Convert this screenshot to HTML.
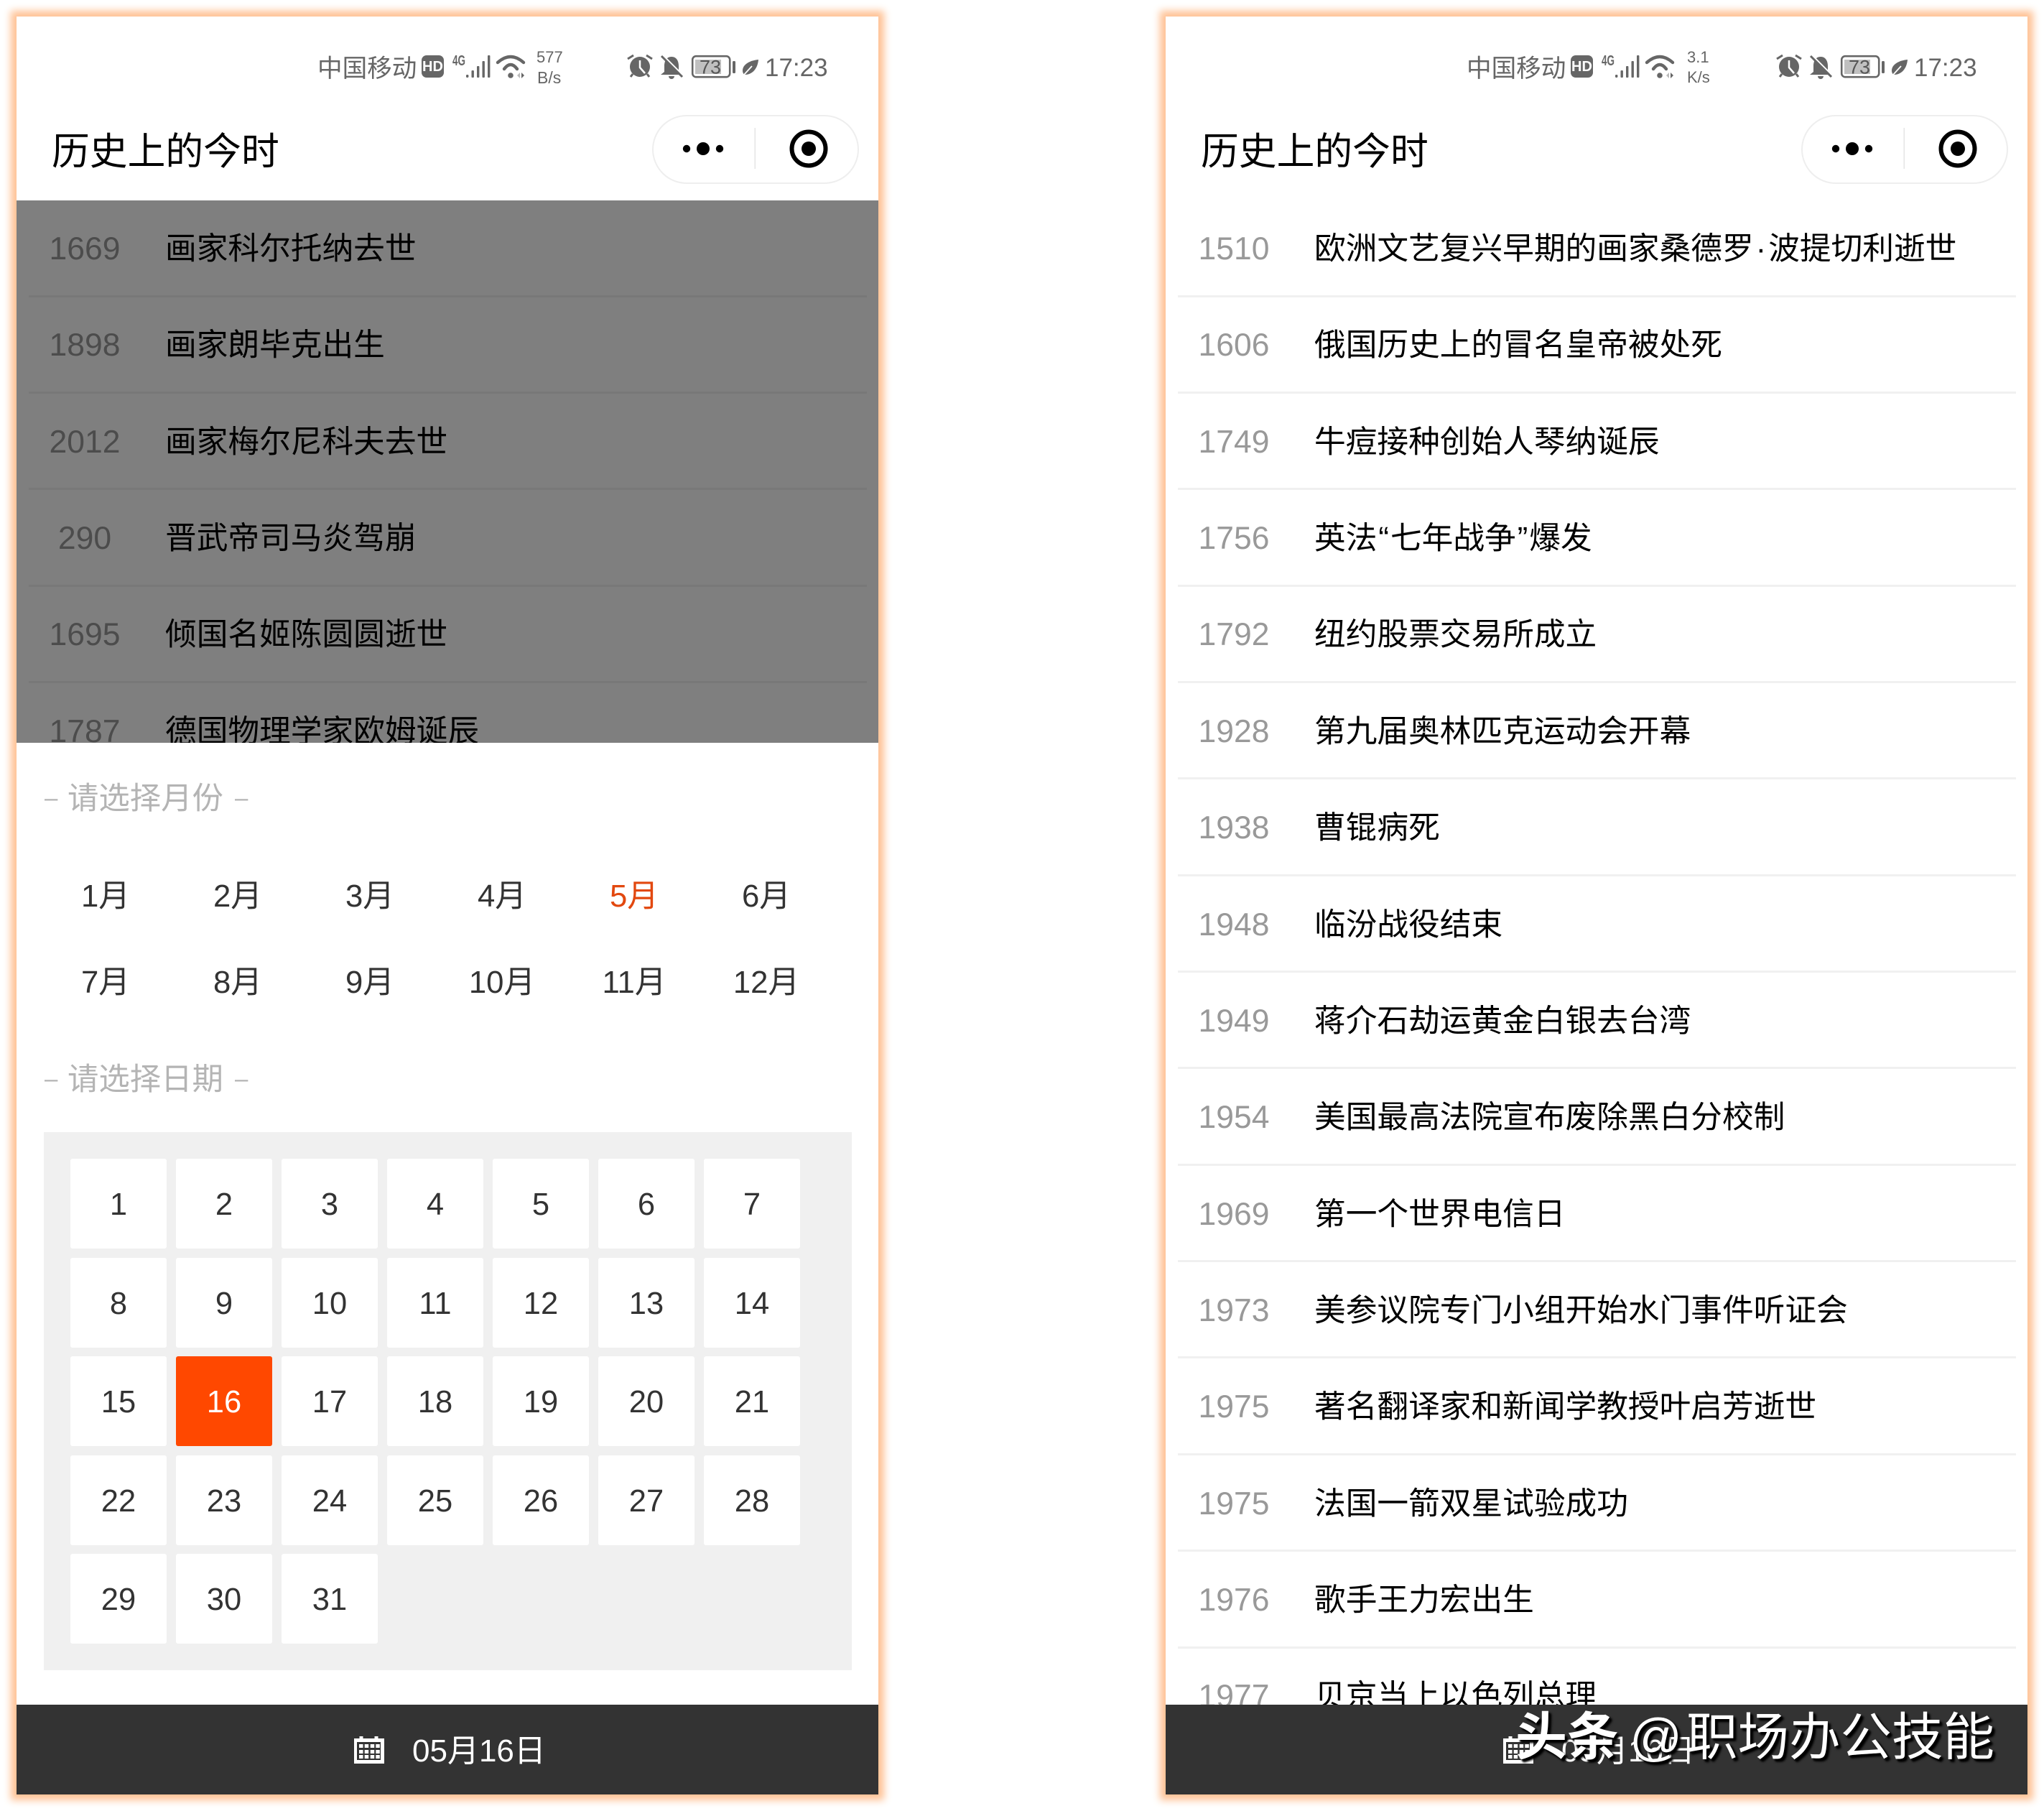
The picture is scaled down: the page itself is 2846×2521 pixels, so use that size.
<!DOCTYPE html>
<html lang="zh">
<head>
<meta charset="utf-8">
<title>历史上的今时</title>
<style>
html,body{margin:0;padding:0;background:#fff}
body{position:relative;width:2846px;height:2521px;overflow:hidden;font-family:"Liberation Sans","Noto Sans CJK SC",sans-serif}
.p{position:absolute;left:0;top:0;width:1300px;height:2521px}
.p2{left:1600px}
.phone{position:absolute;left:23px;top:23px;width:1200px;height:2475px;background:#fff;box-shadow:0 0 10px 8px #ffc295}
.t{position:absolute;white-space:nowrap}
.st{left:442px;top:66px;font-size:34.6px;line-height:60px;color:#666}
.title{left:72px;top:177px;font-size:52.8px;line-height:70px;color:#000}
.cap{position:absolute;left:908px;top:160px;width:283.5px;height:92px;border:2px solid #eee;border-radius:48px;box-sizing:content-box}
.list{position:absolute;left:23px;top:279px;width:1200px;overflow:hidden}
.row{position:relative;height:134.36px}
.row:after{content:"";position:absolute;left:17px;right:16px;top:131.5px;height:3px;background:#f0f0f0}
.y{position:absolute;left:35px;width:120px;text-align:center;top:38px;line-height:60px;font-size:44.5px;color:#999}
.n{position:absolute;left:207px;top:38px;line-height:60px;font-size:43.7px;color:#000;white-space:nowrap}
.q{margin:0 2px}
.dot{margin:0 3px}
.mask{position:absolute;left:23px;top:279px;width:1200px;height:755px;background:rgba(0,0,0,.5)}
.sec{color:#b4b4b4;font-size:43.4px;line-height:60px;left:62px}
.sec i{font-style:normal;font-size:33px;display:inline-block;width:18px;vertical-align:baseline;position:relative;top:-4px}
.sec i:first-child{margin-right:14px}
.sec i:last-child{margin-left:16px}
.months{position:absolute;left:55px;width:1104px;display:flex;flex-wrap:wrap}
.months div{width:184px;height:120px;line-height:60px;text-align:center;font-size:43.7px;color:#333}
.panel{position:absolute;left:61px;top:1576px;width:1125px;height:749px;background:#f0f0f0}
.cal{position:absolute;left:98px;top:1613px;width:1040px;display:flex;flex-wrap:wrap}
.cal div{width:134px;height:125px;margin:0 13px 12.5px 0;background:#fff;border-radius:3px;text-align:center;line-height:129px;font-size:43.5px;color:#333}
.cal .on{background:#ff4800;color:#fff}
.bar{position:absolute;left:23px;top:2373px;width:1200px;height:125px;background:#333}
.bt{left:574px;top:2408px;line-height:60px;font-size:44px;color:#fff}
.wm{color:#fff;text-shadow:3px 3px 2px #000,4px 4px 3px #000;line-height:90px;top:2374px;font-size:72px}
</style>
</head>
<body>
<svg width="0" height="0" style="position:absolute">
<defs>
<symbol id="icons" viewBox="0 0 1300 300" overflow="visible">
<rect x="587" y="77" width="31" height="31" rx="7" fill="#666"/>
<rect x="649" y="104" width="3.4" height="4" rx="1.2" fill="#666"/>
<rect x="656.5" y="98" width="3.4" height="10" rx="1" fill="#666"/>
<rect x="664" y="92" width="3.4" height="16" rx="1" fill="#666"/>
<rect x="671.5" y="85" width="3.4" height="23" rx="1" fill="#666"/>
<rect x="679" y="77" width="3.4" height="31" rx="1" fill="#666"/>
<path d="M693 87Q711 71 729 87M702 96Q711 84 720 96" fill="none" stroke="#666" stroke-width="4.4" stroke-linecap="round"/>
<circle cx="711" cy="105" r="3.8" fill="#666"/>
<path d="M724 101V109L720 105Z" fill="#bbb"/><path d="M726 101V109L730 105Z" fill="#666"/>
<circle cx="891" cy="93" r="14" fill="#666"/>
<path d="M891 84V94L898 102" fill="none" stroke="#fff" stroke-width="2.5"/>
<path d="M874 82L882 77M900 77L908 82M878 107L881 103M904 107L901 103" fill="none" stroke="#666" stroke-width="3"/>
<path d="M935 79C928 79 925 85 925 92V100L920 104H950L945 100V92C945 85 942 79 935 79Z" fill="#666"/>
<path d="M931 106A4 4 0 0 0 939 106Z" fill="#666"/>
<path d="M923 77L952 106" stroke="#fff" stroke-width="2.5"/>
<path d="M921 78L950 107" stroke="#666" stroke-width="3"/>
<rect x="964.2" y="78.2" width="52" height="29" rx="5" fill="#fff" stroke="#666" stroke-width="2.6"/>
<rect x="968" y="83" width="36" height="20" fill="#c0c0c0"/>
<rect x="1020" y="85" width="4" height="17" rx="1.5" fill="#666"/>
<path d="M1056 83C1044 84 1034 90 1034 98C1034 101 1035 103 1037 104C1048 104 1055 95 1056 83Z" fill="#666"/>
<path d="M1036 104L1047 92" stroke="#fff" stroke-width="1.8"/>
<circle cx="956" cy="207" r="5.2" fill="#000"/><circle cx="979" cy="207" r="9" fill="#000"/><circle cx="1002" cy="207" r="5.2" fill="#000"/>
<rect x="1050.5" y="178" width="1.5" height="57" fill="#e4e4e4"/>
<circle cx="1126" cy="207" r="23.5" fill="none" stroke="#000" stroke-width="6"/>
<circle cx="1126" cy="207" r="10" fill="#000"/>
</symbol>
<symbol id="calicon" viewBox="0 0 1300 2521" overflow="visible">
<rect x="500.5" y="2417" width="5" height="6" fill="#fff"/><rect x="521.5" y="2417" width="5" height="6" fill="#fff"/>
<rect x="493" y="2420" width="42" height="35" fill="#fff"/>
<rect x="497" y="2425" width="33" height="25" fill="#333"/>
<g fill="#fff">
<rect x="500" y="2428" width="5.5" height="5"/><rect x="507.7" y="2428" width="5.5" height="5"/><rect x="515.7" y="2428" width="5.5" height="5"/><rect x="523.3" y="2428" width="5.5" height="5"/>
<rect x="500" y="2436" width="5.5" height="5"/><rect x="507.7" y="2436" width="5.5" height="5"/><rect x="515.7" y="2436" width="5.5" height="5"/><rect x="523.3" y="2436" width="5.5" height="5"/>
<rect x="500" y="2443" width="5.5" height="5"/><rect x="507.7" y="2443" width="5.5" height="5"/><rect x="515.7" y="2443" width="5.5" height="5"/><rect x="523.3" y="2443" width="5.5" height="5"/>
</g>
</symbol>
</defs>
</svg>

<!-- LEFT PHONE -->
<div class="p">
  <div class="phone"></div>
  <div class="list" style="height:755px">
    <div class="row"><div class="y">1669</div><div class="n">画家科尔托纳去世</div></div>
    <div class="row"><div class="y">1898</div><div class="n">画家朗毕克出生</div></div>
    <div class="row"><div class="y">2012</div><div class="n">画家梅尔尼科夫去世</div></div>
    <div class="row"><div class="y">290</div><div class="n">晋武帝司马炎驾崩</div></div>
    <div class="row"><div class="y">1695</div><div class="n">倾国名姬陈圆圆逝世</div></div>
    <div class="row"><div class="y">1787</div><div class="n">德国物理学家欧姆诞辰</div></div>
  </div>
  <div class="mask"></div>
  <div class="cap"></div>
  <svg style="position:absolute;left:0;top:0" width="1300" height="300" viewBox="0 0 1300 300"><use href="#icons" width="1300" height="300"/>
    <text x="602.5" y="99" text-anchor="middle" font-size="20" font-weight="700" fill="#fff" font-family="Liberation Sans">HD</text>
    <text x="630" y="91" font-size="20" font-weight="700" fill="#666" font-family="Liberation Sans" textLength="18" lengthAdjust="spacingAndGlyphs">4G</text>
    <text x="989" y="102.500" text-anchor="middle" font-size="27" fill="#555" font-family="Liberation Sans">73</text>
  </svg>
  <div class="t st">中国移动</div>
  <div class="t" style="left:747px;top:65px;font-size:22px;line-height:30px;color:#666">577</div>
  <div class="t" style="left:748px;top:93px;font-size:23px;line-height:30px;color:#666">B/s</div>
  <div class="t" style="left:1065px;top:75px;font-size:35px;line-height:40px;color:#666">17:23</div>
  <div class="t title">历史上的今时</div>
  <div class="t sec" style="top:1082px"><i>–</i>请选择月份<i>–</i></div>
  <div class="months" style="top:1218px">
    <div>1月</div><div>2月</div><div>3月</div><div>4月</div><div style="color:#e2480f">5月</div><div>6月</div>
    <div>7月</div><div>8月</div><div>9月</div><div>10月</div><div>11月</div><div>12月</div>
  </div>
  <div class="t sec" style="top:1473px"><i>–</i>请选择日期<i>–</i></div>
  <div class="panel"></div>
  <div class="cal">
    <div>1</div><div>2</div><div>3</div><div>4</div><div>5</div><div>6</div><div>7</div>
    <div>8</div><div>9</div><div>10</div><div>11</div><div>12</div><div>13</div><div>14</div>
    <div>15</div><div class="on">16</div><div>17</div><div>18</div><div>19</div><div>20</div><div>21</div>
    <div>22</div><div>23</div><div>24</div><div>25</div><div>26</div><div>27</div><div>28</div>
    <div>29</div><div>30</div><div>31</div>
  </div>
  <div class="bar"></div>
  <svg style="position:absolute;left:0;top:0" width="1300" height="2521" viewBox="0 0 1300 2521"><use href="#calicon" width="1300" height="2521"/></svg>
  <div class="t bt">05月16日</div>
</div>

<!-- RIGHT PHONE -->
<div class="p p2">
  <div class="phone"></div>
  <div class="list" style="height:2094px">
    <div class="row"><div class="y">1510</div><div class="n">欧洲文艺复兴早期的画家桑德罗<span class="dot">·</span>波提切利逝世</div></div>
    <div class="row"><div class="y">1606</div><div class="n">俄国历史上的冒名皇帝被处死</div></div>
    <div class="row"><div class="y">1749</div><div class="n">牛痘接种创始人琴纳诞辰</div></div>
    <div class="row"><div class="y">1756</div><div class="n">英法<span class="q">“</span>七年战争<span class="q">”</span>爆发</div></div>
    <div class="row"><div class="y">1792</div><div class="n">纽约股票交易所成立</div></div>
    <div class="row"><div class="y">1928</div><div class="n">第九届奥林匹克运动会开幕</div></div>
    <div class="row"><div class="y">1938</div><div class="n">曹锟病死</div></div>
    <div class="row"><div class="y">1948</div><div class="n">临汾战役结束</div></div>
    <div class="row"><div class="y">1949</div><div class="n">蒋介石劫运黄金白银去台湾</div></div>
    <div class="row"><div class="y">1954</div><div class="n">美国最高法院宣布废除黑白分校制</div></div>
    <div class="row"><div class="y">1969</div><div class="n">第一个世界电信日</div></div>
    <div class="row"><div class="y">1973</div><div class="n">美参议院专门小组开始水门事件听证会</div></div>
    <div class="row"><div class="y">1975</div><div class="n">著名翻译家和新闻学教授叶启芳逝世</div></div>
    <div class="row"><div class="y">1975</div><div class="n">法国一箭双星试验成功</div></div>
    <div class="row"><div class="y">1976</div><div class="n">歌手王力宏出生</div></div>
    <div class="row"><div class="y">1977</div><div class="n">贝京当上以色列总理</div></div>
  </div>
  <div class="cap"></div>
  <svg style="position:absolute;left:0;top:0" width="1300" height="300" viewBox="0 0 1300 300"><use href="#icons" width="1300" height="300"/>
    <text x="602.5" y="99" text-anchor="middle" font-size="20" font-weight="700" fill="#fff" font-family="Liberation Sans">HD</text>
    <text x="630" y="91" font-size="20" font-weight="700" fill="#666" font-family="Liberation Sans" textLength="18" lengthAdjust="spacingAndGlyphs">4G</text>
    <text x="989" y="102.500" text-anchor="middle" font-size="27" fill="#555" font-family="Liberation Sans">73</text>
  </svg>
  <div class="t st">中国移动</div>
  <div class="t" style="left:749px;top:65px;font-size:22px;line-height:30px;color:#666">3.1</div>
  <div class="t" style="left:749px;top:93px;font-size:22px;line-height:30px;color:#666">K/s</div>
  <div class="t" style="left:1065px;top:75px;font-size:35px;line-height:40px;color:#666">17:23</div>
  <div class="t title">历史上的今时</div>
  <div class="bar"></div>
  <svg style="position:absolute;left:0;top:0" width="1300" height="2521" viewBox="0 0 1300 2521"><use href="#calicon" width="1300" height="2521"/></svg>
  <div class="t bt">05月16日</div>
  <div class="t wm" style="left:510px;font-size:72px;font-weight:700">头条</div>
  <div class="t wm" style="left:669px">@</div>
  <div class="t wm" style="left:748px;font-size:71.5px">职场办公技能</div>
</div>
</body>
</html>
